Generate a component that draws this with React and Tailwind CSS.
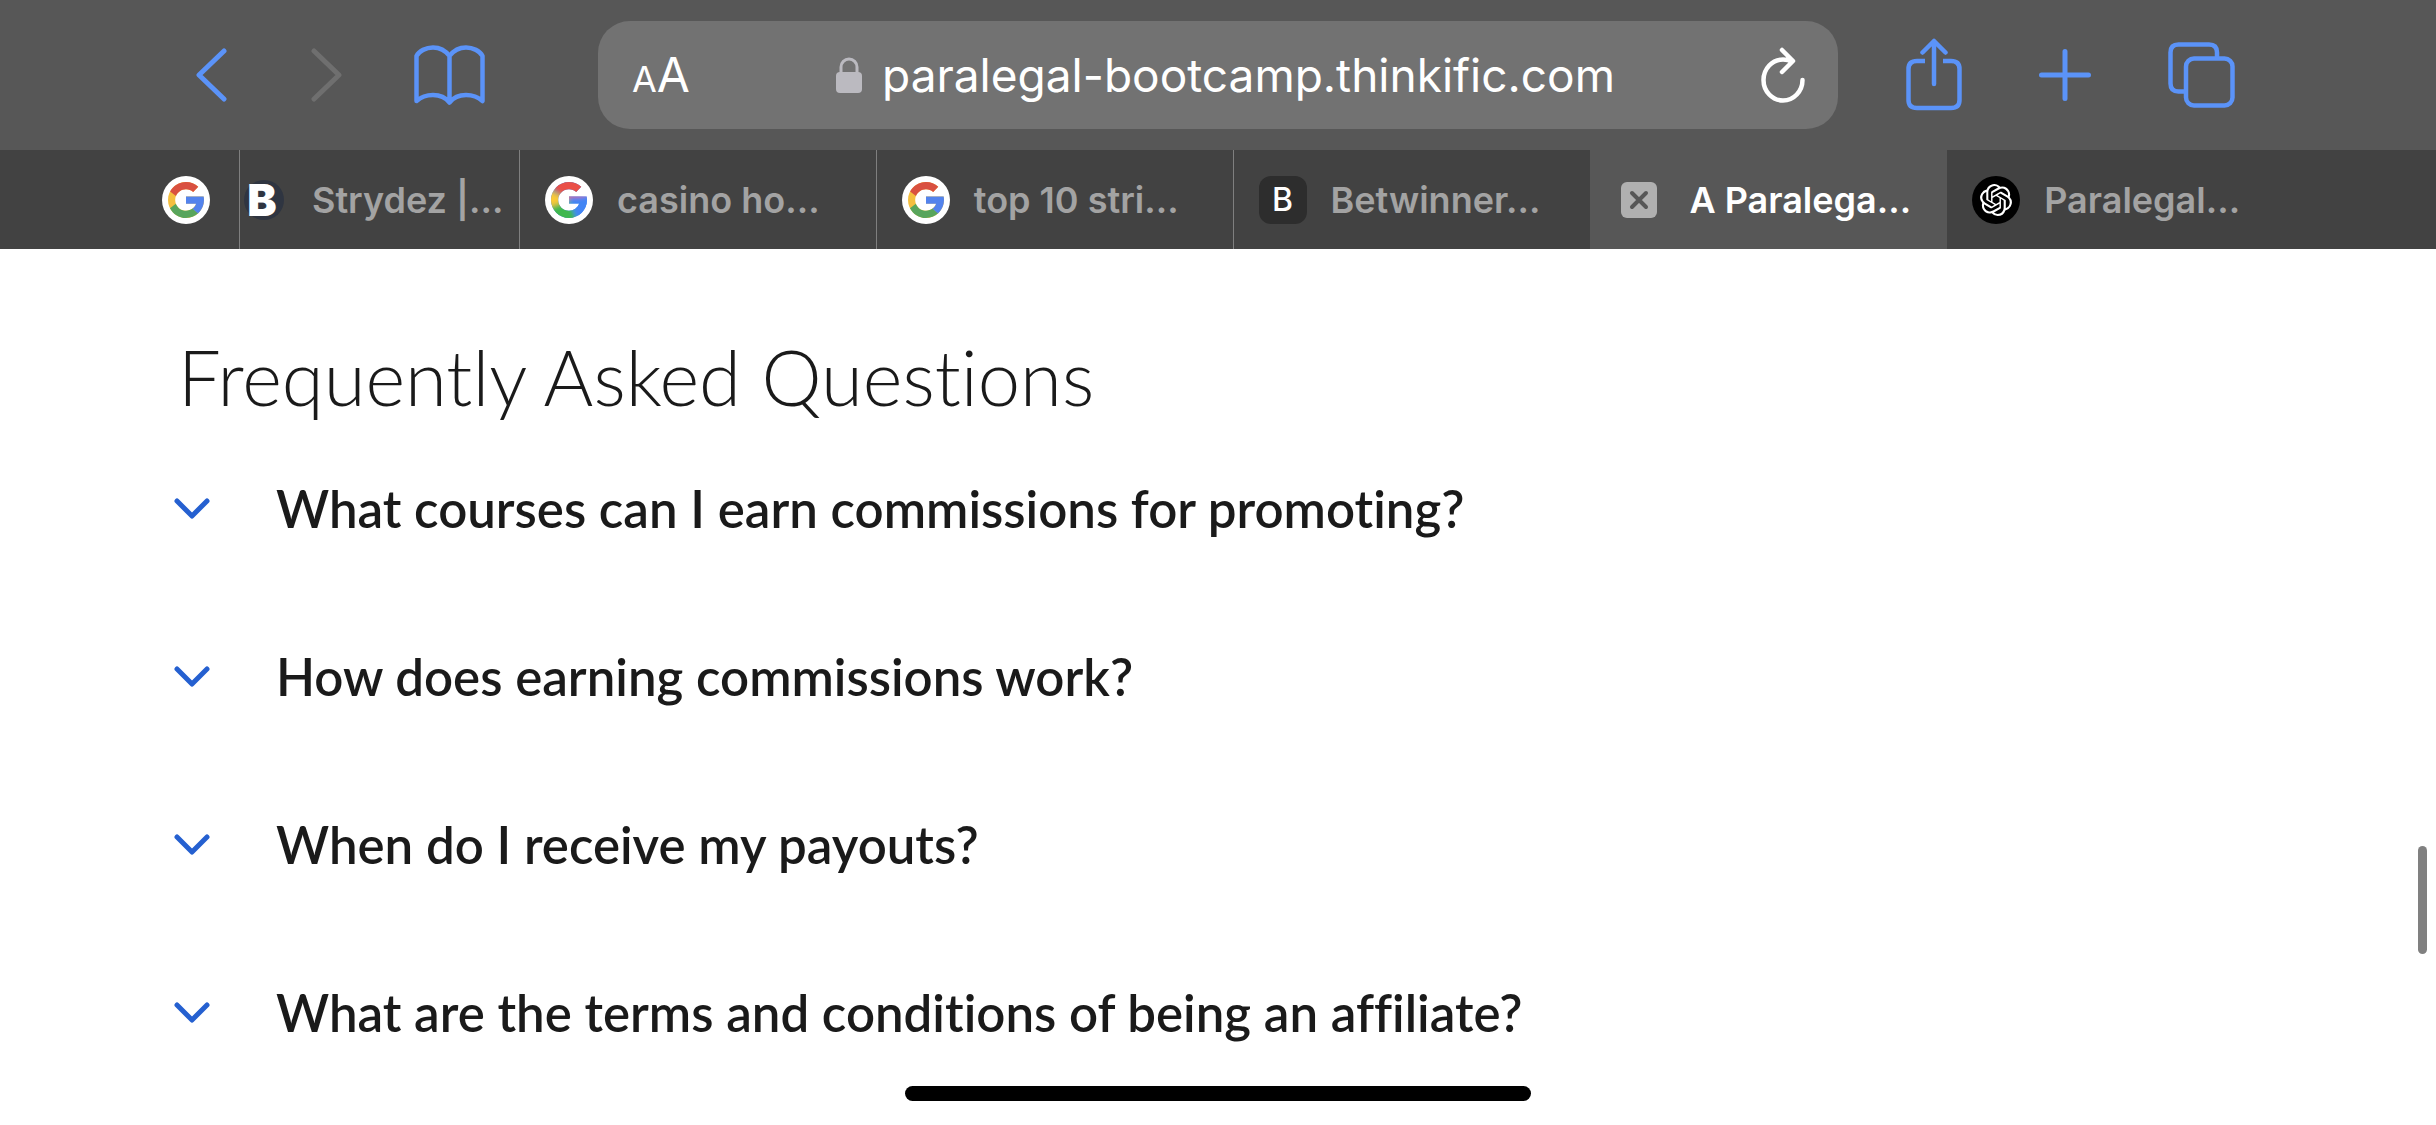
import React, { useState } from 'react';
import { SiOpenai } from 'react-icons/si';

const G_PATH =
  'M43.611,20.083H42V20H24v8h11.303c-1.649,4.657-6.08,8-11.303,8c-6.627,0-12-5.373-12-12c0-6.627,5.373-12,12-12c3.059,0,5.842,1.154,7.961,3.039l5.657-5.657C34.046,6.053,29.268,4,24,4C12.955,4,4,12.955,4,24c0,11.045,8.955,20,20,20c11.045,0,20-8.955,20-20C44,22.659,43.862,21.35,43.611,20.083z';

// Google favicon, flat colours
const GoogleIcon = () => (
  <span className="flex size-12 shrink-0 items-center justify-center rounded-full bg-white">
    <svg viewBox="4 4 40 40" className="size-9">
      <path fill="#f4bf3f" d={G_PATH} />
      <path fill="#d95040" d="M6.306,14.691l6.571,4.819C14.655,15.108,18.961,12,24,12c3.059,0,5.842,1.154,7.961,3.039l5.657-5.657C34.046,6.053,29.268,4,24,4C16.318,4,9.656,8.337,6.306,14.691z" />
      <path fill="#58a55c" d="M24,44c5.166,0,9.86-1.977,13.409-5.192l-6.19-5.238C29.211,35.091,26.715,36,24,36c-5.202,0-9.619-3.317-11.283-7.946l-6.522,5.025C9.505,39.556,16.227,44,24,44z" />
      <path fill="#5383ec" d="M43.611,20.083H24v8h11.303c-0.792,2.237-2.231,4.166-4.087,5.571l6.193,5.238C36.971,39.205,44,34,44,24C44,22.659,43.862,21.35,43.611,20.083z" />
    </svg>
  </span>
);

// Newer Google favicon, colours blend into each other
const GoogleGradientIcon = () => (
  <span className="flex size-12 shrink-0 items-center justify-center rounded-full bg-white">
    <svg viewBox="4 4 40 40" className="size-9">
      <defs>
        <clipPath id="g-shape">
          <path d={G_PATH} />
        </clipPath>
        <filter id="g-blend" x="-50%" y="-50%" width="200%" height="200%">
          <feGaussianBlur stdDeviation="3" />
        </filter>
      </defs>
      <g clipPath="url(#g-shape)">
        <rect width="48" height="48" fill="#4285f4" />
        <g filter="url(#g-blend)">
          <path fill="#ea4f46" d="M24 24L4 10L4 0H46V17Z" />
          <path fill="#fbc934" d="M24 24L-2 10V34Z" />
          <path fill="#3fb84f" d="M24 24L-2 34V52H34Z" />
          <path fill="#4285f4" d="M24 20H52V40L36 46L24 26Z" />
        </g>
      </g>
    </svg>
  </span>
);

const StrydezIcon = () => (
  <span className="flex size-12 shrink-0 items-center pl-1">
    <span className="flex size-10 items-center justify-center rounded-full bg-[#2f3541] pr-1 text-[44px] leading-none font-black text-white">
      B
    </span>
  </span>
);

const LetterIcon = () => (
  <span className="flex size-12 shrink-0 items-center justify-center rounded-xl bg-[#2d2d2d] text-[32px] leading-none font-medium text-white">
    B
  </span>
);

const CloseIcon = () => (
  <span className="flex size-9 shrink-0 items-center justify-center rounded-md bg-[#b0b0b0]">
    <svg viewBox="0 0 20 20" className="size-5" stroke="#575757" strokeWidth="4" strokeLinecap="round">
      <path d="M3 3L17 17M17 3L3 17" />
    </svg>
  </span>
);

const ChatIcon = () => (
  <span className="flex size-12 shrink-0 items-center justify-center rounded-full bg-black">
    <SiOpenai className="size-8 text-white" />
  </span>
);

const tabs = [
  { title: '', label: 'Google', Icon: GoogleIcon, box: 'justify-end pr-[29px]' },
  { title: 'Strydez |...', Icon: StrydezIcon, box: 'gap-6' },
  { title: 'casino ho...', Icon: GoogleGradientIcon, box: 'gap-6 pl-[25px]' },
  { title: 'top 10 stri...', Icon: GoogleIcon, box: 'gap-6 pl-[25px]' },
  { title: 'Betwinner...', Icon: LetterIcon, box: 'gap-6 pl-[25px]' },
  { title: 'A Paralega...', Icon: CloseIcon, box: 'gap-8 pl-[31px]', active: true },
  { title: 'Paralegal...', Icon: ChatIcon, box: 'gap-6 pl-[25px]' },
];

const faqs = [
  'What courses can I earn commissions for promoting?',
  'How does earning commissions work?',
  'When do I receive my payouts?',
  'What are the terms and conditions of being an affiliate?',
];

const Toolbar = () => {
  const [url, setUrl] = useState('paralegal-bootcamp.thinkific.com');

  return (
    <header className="flex h-[150px] items-center bg-[#575757] pr-[201px] pl-[196px] text-[#5b93f8]">
      {/* Navigation */}
      <button aria-label="Back">
        <svg viewBox="0 0 31 54" className="h-[54px] w-[31px]" fill="none" stroke="currentColor" strokeWidth="5" strokeLinecap="round" strokeLinejoin="round">
          <path d="M28 3L3 27L28 51" />
        </svg>
      </button>
      <button aria-label="Forward" className="ml-[84px] text-[#6f6f6f]">
        <svg viewBox="0 0 31 54" className="h-[54px] w-[31px]" fill="none" stroke="currentColor" strokeWidth="5" strokeLinecap="round" strokeLinejoin="round">
          <path d="M3 3L28 27L3 51" />
        </svg>
      </button>
      <button aria-label="Bookmarks" className="ml-[72px]">
        <svg viewBox="0 0 71 60" className="h-[60px] w-[71px]" fill="none" stroke="currentColor" strokeWidth="4.5" strokeLinejoin="round">
          <path d="M35.500 11C31 5 25 2.500 19 2.500C12 2.500 5 6 2.500 11V56C7 52 13 50 19 50C26 50 32 53 35.500 57.500C39 53 45 50 52 50C58 50 64 52 68.500 56V11C66 6 59 2.500 52 2.500C46 2.500 40 5 35.500 11ZM35.500 11V57" />
        </svg>
      </button>

      {/* Address bar */}
      <div className="mr-[68px] ml-[113px] flex h-[108px] flex-1 items-center justify-between rounded-[32px] bg-[#727272] pr-[33px] pl-[34px] text-white">
        <button aria-label="Page settings" className="flex items-baseline">
          <span className="text-4xl">A</span>
          <span className="text-5xl">A</span>
        </button>
        <label className="flex items-center gap-5">
          <svg viewBox="0 0 26 36" className="h-9 w-[26px]">
            <rect x="0" y="15" width="26" height="21" rx="4" fill="#bbbac0" />
            <path d="M5 16V10a8 8 0 0 1 16 0V16" fill="none" stroke="#bbbac0" strokeWidth="3" />
          </svg>
          <input
            aria-label="Address"
            className="field-sizing-content bg-transparent text-[46px] leading-[56px] outline-none"
            value={url}
            onChange={(e) => setUrl(e.target.value)}
          />
        </label>
        <button aria-label="Reload">
          <svg viewBox="0 0 44 56" className="h-14 w-11" fill="none" stroke="currentColor" strokeWidth="4.5" strokeLinecap="round" strokeLinejoin="round">
            <path d="M31 14.500C28 13 25 12.500 22 12.500A19.500 20.500 0 1 0 41.500 33M21 3L32 14L21 25" />
          </svg>
        </button>
      </div>

      {/* Actions */}
      <button aria-label="Share">
        <svg viewBox="0 0 56 74" className="h-[74px] w-14" fill="none" stroke="currentColor" strokeWidth="4.5" strokeLinecap="round" strokeLinejoin="round">
          <path strokeLinecap="butt" d="M19 23H11Q2.500 23 2.500 31V62Q2.500 70 11 70H45Q53.500 70 53.500 62V31Q53.500 23 45 23H37" />
          <path d="M28 46V3M16.500 14.500L28 3L39.500 14.500" />
        </svg>
      </button>
      <button aria-label="New tab" className="ml-[77px]">
        <svg viewBox="0 0 52 52" className="size-[52px]" stroke="currentColor" strokeWidth="5" strokeLinecap="round">
          <path d="M26 2.500V49.500M2.500 26H49.500" />
        </svg>
      </button>
      <button aria-label="Show tabs" className="ml-[77px]">
        <svg viewBox="0 0 67 66" className="h-[66px] w-[67px]" fill="none" stroke="currentColor" strokeWidth="4.5">
          <path d="M17 49.500H10.500Q2.500 49.500 2.500 41.500V10.500Q2.500 2.500 10.500 2.500H41Q49 2.500 49 10.500V16" />
          <rect x="18" y="16.500" width="46.500" height="47" rx="8" />
        </svg>
      </button>
    </header>
  );
};

const TabStrip = () => (
  <nav className="grid h-[99px] grid-cols-[108px_280px_repeat(5,1fr)] bg-[#424242] px-[132px] text-4xl font-semibold text-[#a3a3a3]">
    {tabs.map(({ title, label, Icon, box, active }, i) => (
      <button
        key={i}
        aria-label={label}
        className={`flex items-center whitespace-nowrap ${box} ${
          active ? 'bg-[#575757] text-white' : i < 4 ? 'border-r border-[#7f7f7f]' : ''
        }`}
      >
        <Icon />
        {title && <span>{title}</span>}
      </button>
    ))}
  </nav>
);

const App = () => {
  return (
    <div className="min-h-screen bg-white font-['Inter',sans-serif]">
      <Toolbar />
      <TabStrip />

      <main className="px-[174px] pt-[84px] font-['Lato',sans-serif] text-[#1a1a1a] [font-variant-ligatures:none]">
        <h1 className="pl-1 text-[76px] leading-[88px] font-light">Frequently Asked Questions</h1>

        <ul className="mt-[52px] flex flex-col gap-24">
          {faqs.map((question) => (
            <li key={question}>
              <button className="flex items-center gap-[66px] text-left text-[51px] leading-[72px] font-semibold">
                <svg viewBox="0 0 36 22" className="h-[22px] w-9 shrink-0" fill="none" stroke="#2560d0" strokeWidth="5" strokeLinecap="round" strokeLinejoin="round">
                  <path d="M3 3L18 18L33 3" />
                </svg>
                {question}
              </button>
            </li>
          ))}
        </ul>
      </main>

      {/* Scroll position and home indicator float above the page */}
      <div className="fixed top-[846px] right-[9px] h-[108px] w-[9px] rounded-full bg-[#808080]" />
      <div className="fixed inset-x-0 bottom-6 mx-auto h-[15px] w-[626px] rounded-full bg-black" />
    </div>
  );
};

export default App;
